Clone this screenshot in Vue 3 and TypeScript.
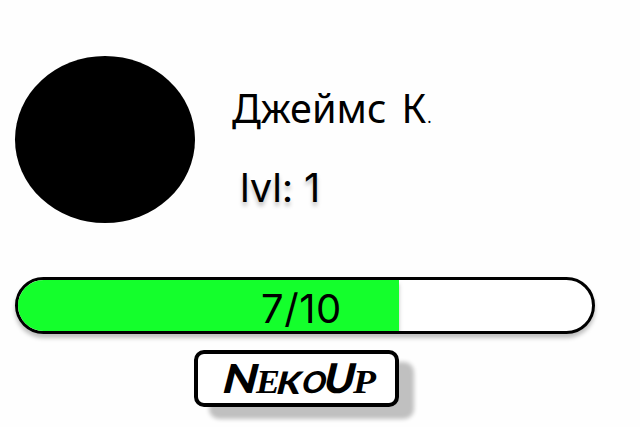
<script setup lang="ts">
interface Player {
  name: string
  initial: string
  level: number
  points: number
  goal: number
}

interface BrandLetter {
  char: string
  face: 'broad' | 'pointed'
  size: number
  width: number
  transform: string
}

const player: Player = { name: 'Джеймс', initial: 'К', level: 1, points: 7, goal: 10 }
const fillWidth = '381px'

const brandLetters: BrandLetter[] = [
  { char: 'N', face: 'broad', size: 40, width: 35, transform: 'translate(8 39) skewX(-6)' },
  { char: 'E', face: 'pointed', size: 33, width: 24, transform: 'translate(42 38.5)' },
  { char: 'K', face: 'broad', size: 31, width: 24, transform: 'translate(62 40) skewX(-6)' },
  { char: 'O', face: 'broad', size: 30, width: 24, transform: 'translate(87 39) skewX(-8)' },
  { char: 'U', face: 'broad', size: 41, width: 31, transform: 'translate(109 39) skewX(-6)' },
  { char: 'P', face: 'pointed', size: 33, width: 23, transform: 'translate(139 38.5)' },
]
</script>

<template>
  <main class="card">
    <section class="profile">
      <div class="avatar"></div>
      <div class="details">
        <div class="name"><span>{{ player.name }}</span><span class="initial">{{ player.initial }}</span><span class="dot">.</span></div>
        <div class="level">lvl: {{ player.level }}</div>
      </div>
    </section>
    <div class="progress">
      <div class="fill" :style="{ width: fillWidth }"></div>
      <div class="count">{{ player.points }}/{{ player.goal }}</div>
    </div>
    <button class="brand" type="button">
      <svg class="logo" width="165" height="49" viewBox="0 0 165 49" aria-label="NekoUp">
        <text
          v-for="letter in brandLetters"
          :key="letter.char"
          :class="letter.face"
          :font-size="letter.size"
          :textLength="letter.width"
          :transform="letter.transform"
          lengthAdjust="spacingAndGlyphs"
        >{{ letter.char }}</text>
      </svg>
    </button>
  </main>
</template>

<style>
body {
  background: #fefefe;
}
</style>

<style scoped>
.card {
  box-sizing: border-box;
  width: 640px;
  height: 427px;
  padding: 56px 45px 20px 15px;
  display: flex;
  flex-direction: column;
  overflow: hidden;
  color: #000;
  font-family: Inter, "Noto Sans", sans-serif;
}
.profile {
  display: flex;
  height: 167px;
}
.avatar {
  width: 180px;
  height: 167px;
  border-radius: 50%;
  background: #000;
}
.details {
  padding: 25px 0 0 37px;
}
.name {
  display: flex;
  align-items: baseline;
  height: 54px;
  line-height: 54px;
  font-family: "Noto Sans", sans-serif;
  font-size: 39.6px;
}
.initial {
  margin-left: 15px;
}
.dot {
  margin-left: 1px;
  font-size: 16px;
}
.level {
  margin-top: 29px;
  padding-left: 8px;
  line-height: 48px;
  font-size: 40px;
  letter-spacing: -0.2px;
  text-shadow: 0 4px 4px rgba(0, 0, 0, 0.25);
}
.progress {
  box-sizing: border-box;
  flex: none;
  display: grid;
  width: 580px;
  height: 57px;
  margin-top: 54px;
  border: 3px solid #000;
  border-radius: 29px;
  overflow: hidden;
  background: #fff;
  box-shadow: 0 4px 4px rgba(0, 0, 0, 0.25);
}
.fill {
  grid-area: 1 / 1;
  background: #14ff2c;
  box-shadow: 0 4px 4px rgba(0, 0, 0, 0.25);
}
.count {
  grid-area: 1 / 1;
  padding: 5px 0 0 243px;
  line-height: 48px;
  font-size: 40px;
  letter-spacing: 0.6px;
}
.brand {
  box-sizing: border-box;
  display: flex;
  align-items: center;
  justify-content: center;
  width: 205px;
  height: 57px;
  margin: 16px 0 0 179px;
  padding: 0;
  border: 4px solid #000;
  border-radius: 10px;
  background: #fff;
  box-shadow: 15px 12px 4px #c0c0c0;
}
.logo {
  overflow: visible;
}
.broad {
  font-family: Lato, sans-serif;
  font-weight: 900;
  font-style: italic;
}
.pointed {
  font-family: "Liberation Serif", serif;
  font-weight: 700;
  font-style: italic;
}
</style>
